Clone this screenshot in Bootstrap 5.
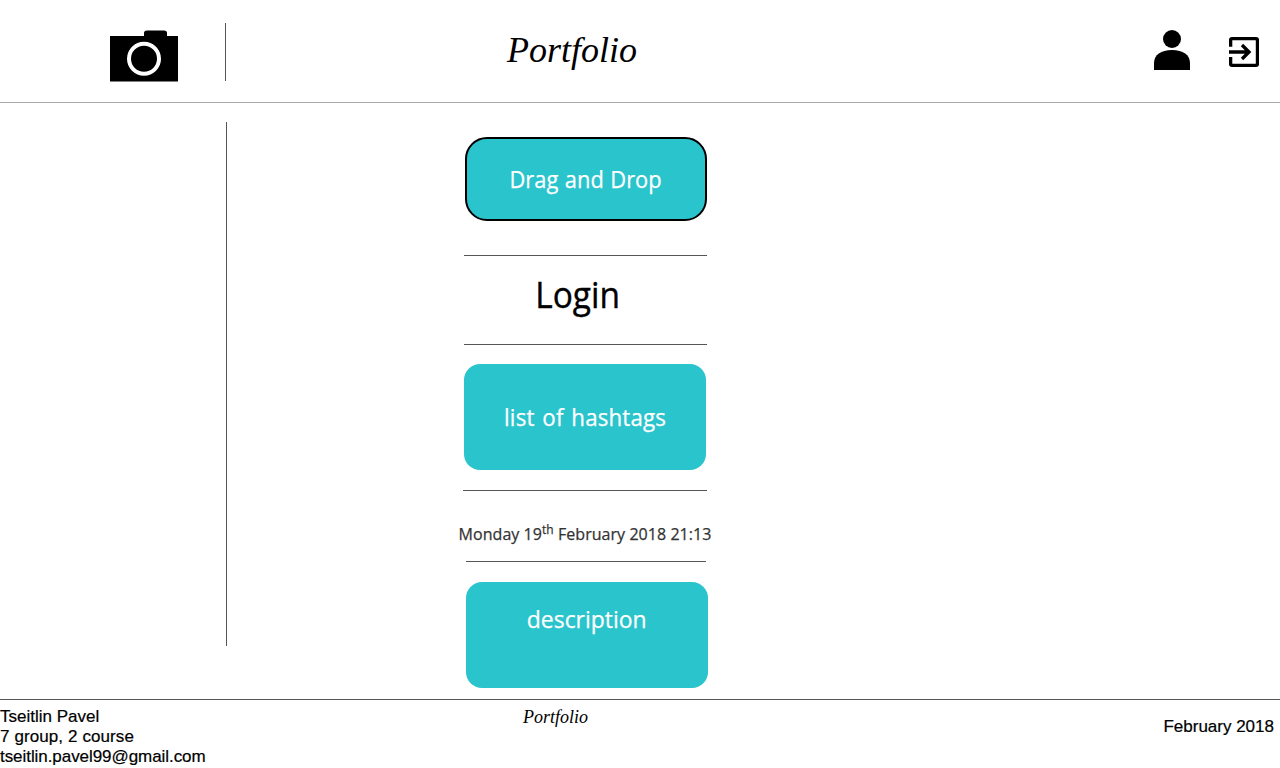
<!DOCTYPE html>
<html lang="en">
<head>
<meta charset="utf-8">
<meta name="viewport" content="width=device-width, initial-scale=1">
<title>Portfolio</title>
<link rel="stylesheet" href="https://cdn.jsdelivr.net/npm/bootstrap@5.3.0/dist/css/bootstrap.min.css">
<style>
body{height:768px;overflow:hidden;color:#000;font-family:"Open Sans","Noto Sans",sans-serif}
.site-head{height:103px;border-bottom:1px solid #a9a9a9}
.brand-area{width:226px;height:58px;margin-top:23px;border-right:1px solid #555;padding:7px 0 0 110px}
.script-title{font-family:"Liberation Serif",serif;font-style:italic;font-size:36px;line-height:40px;margin:30px 0 0 281px;white-space:nowrap}
.head-icons{margin-left:auto;padding-right:21px}
.exit-icon{margin-left:39px}
.side{width:227px;height:524px;margin-top:19px;border-right:1px solid #555}
.site-main{height:596px}
.feed{width:242px;margin-left:237px;padding-top:34px;white-space:nowrap}
.tile{width:242px;height:106px;background:#2ac4cd;color:#fff;border-radius:16px;font-size:24px;line-height:32px;-webkit-text-stroke:.25px #fff}
.tile span,.login span{display:inline-block;transform:scaleX(.93)}
.tile-tags{margin-top:19px;padding-bottom:1px}
.tile-tags span{transform:scaleX(.93);word-spacing:2px;letter-spacing:.15px}
.tile-desc{margin:20px 0 0 2px;padding-top:21px}
.tile-desc span{transform:scaleX(.955)}
.drop{width:242px;height:84px;border:2px solid #000;border-radius:22px;margin-left:1px}
.drop span{transform:scaleX(.91);word-spacing:1px}
.rule{height:1px;width:243px;background:#555}
.rule-top{margin-top:34px}
.rule-wide{margin:20px 0 0 -1px;width:244px}
.rule-short{margin-left:2px;width:240px}
.login{height:88px;font-size:36px;line-height:50px;padding:14px 14px 0 0;-webkit-text-stroke:.4px #000}
.stamp{height:70px;font-size:16px;line-height:24px;padding-top:31px;color:#333;margin-left:-6px;width:254px;letter-spacing:.05px;-webkit-text-stroke:.25px #333}
.stamp sup{font-size:12px;line-height:0;top:-.5em}
.site-foot{height:69px;border-top:1px solid #555;font-family:"Liberation Sans",sans-serif;font-size:17px;line-height:20px;-webkit-text-stroke:.2px #000}
.foot-author{width:523px;padding-top:7px}
.foot-author .course{letter-spacing:.1px}
.foot-author .mail{letter-spacing:-.06px}
.foot-title{font-family:"Liberation Serif",serif;font-style:italic;font-size:18px;padding-top:7px;-webkit-text-stroke:0}
.foot-date{padding:17px 6px 0 0}
</style>
</head>
<body class="bg-white">
<header class="site-head d-flex align-items-start">
  <div class="brand-area">
    <svg class="d-block" width="68" height="52" viewBox="0 0 68 52" aria-label="Camera"><path d="M0 6h34V3q0-2.500 3-2.500h17q3 0 3 2.500v3h11v45.500H0z"/><circle cx="34" cy="28.700" r="15" stroke="#fff" stroke-width="4"/></svg>
  </div>
  <h1 class="script-title">Portfolio</h1>
  <div class="head-icons d-flex">
    <svg width="36" height="70" viewBox="0 0 36 70" aria-label="Profile"><circle cx="18" cy="39" r="9"/><path d="M0 70V63C0 55 7 50 18 50S36 55 36 63V70z"/></svg>
    <svg class="exit-icon" width="30" height="70" viewBox="0 0 30 70" fill="none" stroke="#000" stroke-width="3.300" aria-label="Sign in"><path d="M1.650 46.800V40q0-1.400 1.400-1.400h24q1.400 0 1.400 1.400v24q0 1.400-1.400 1.400h-24q-1.400 0-1.400-1.400v-7M0 52h20M13 45l7 7-7 7"/></svg>
  </div>
</header>
<main class="site-main d-flex">
  <aside class="side"></aside>
  <section class="feed">
    <div class="tile drop d-flex align-items-center justify-content-center"><span>Drag and Drop</span></div>
    <div class="rule rule-top"></div>
    <div class="login text-center"><span>Login</span></div>
    <div class="rule"></div>
    <div class="tile tile-tags d-flex align-items-center justify-content-center"><span>list of hashtags</span></div>
    <div class="rule rule-wide"></div>
    <div class="stamp text-center">Monday 19<sup>th</sup> February 2018 21:13</div>
    <div class="rule rule-short"></div>
    <div class="tile tile-desc text-center"><span>description</span></div>
  </section>
</main>
<footer class="site-foot d-flex align-items-start">
  <div class="foot-author">Tseitlin Pavel<br><span class="course">7 group, 2 course</span><br><span class="mail">tseitlin.pavel99@gmail.com</span></div>
  <div class="foot-title">Portfolio</div>
  <div class="foot-date ms-auto">February 2018</div>
</footer>
<script src="https://cdn.jsdelivr.net/npm/bootstrap@5.3.0/dist/js/bootstrap.bundle.min.js"></script>
</body>
</html>
